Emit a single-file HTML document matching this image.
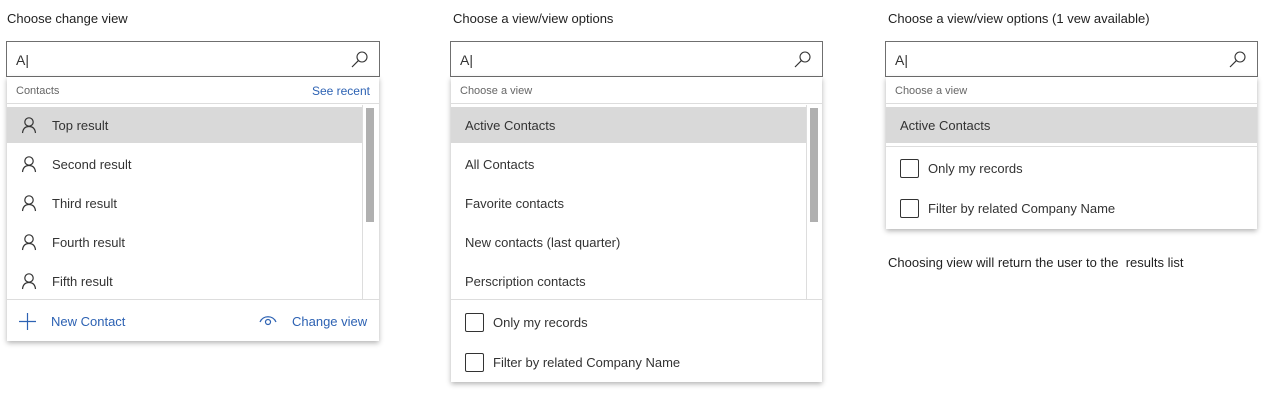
<!DOCTYPE html>
<html><head><style>
*{margin:0;padding:0;box-sizing:border-box}
body{width:1268px;height:402px;background:#fff;font-family:"Liberation Sans",sans-serif;color:#333;position:relative;overflow:hidden;font-size:13px}
.a{position:absolute;white-space:nowrap}
.t{font-size:13px;color:#222;line-height:16px}
.inp{position:absolute;height:36px;border:1px solid #6f6f6f;background:#fff}
.inp span{position:absolute;left:9px;top:10px;font-size:14px;color:#333}
.dd{position:absolute;background:#fff;box-shadow:0 2px 5px rgba(0,0,0,.3)}
.hd{position:absolute;left:0;right:0;top:0;height:27px;border-bottom:1px solid #ddd}
.hd span{position:absolute;left:9px;top:8px;font-size:11px;color:#666}
.hd span.blue{color:#2d62b3;font-size:12px;top:7px}
.row{position:absolute;left:0;height:36px;line-height:38px;font-size:13px;color:#333}
.hl{background:#d9d9d9}
.sep{position:absolute;left:0;right:0;height:1px;background:#ddd}
.cb{position:absolute;left:14px;width:19px;height:19px;border:1px solid #333;border-radius:2px}
.cbt{position:absolute;left:42px;font-size:13px;color:#333;line-height:16px}
.blue{color:#2d62b3}
</style></head><body>
<div class="a t" style="left:7px;top:11px">Choose change view</div>
<div class="a t" style="left:453px;top:11px">Choose a view/view options</div>
<div class="a t" style="left:888px;top:11px">Choose a view/view options (1 vew available)</div>

<!-- panel 1 -->
<div class="inp" style="left:6px;top:41px;width:374px"><span>A|</span>
<svg class="a" style="right:11px;top:9px" width="17" height="17" viewBox="0 0 17 17"><circle cx="11" cy="6" r="5" fill="none" stroke="#333" stroke-width="1.1"/><path d="M7.3 9.7L1 16" stroke="#333" stroke-width="1.2"/></svg></div>
<div class="dd" style="left:7px;top:77px;width:372px;height:264px">
<div class="hd"><span>Contacts</span><span class="blue" style="left:auto;right:9px">See recent</span></div>
<div class="row hl" style="top:30px;width:355px"></div>
<div style="position:absolute;left:355px;top:28px;width:1px;height:194px;background:#ddd"></div>
<div style="position:absolute;left:359px;top:31px;width:8px;height:114px;background:#b0b0b0"></div>
<div class="sep" style="top:222px"></div>
</div>
<svg width="0" height="0" style="position:absolute"><defs><g id="p"><circle cx="8" cy="5" r="4.2" fill="none" stroke="#333" stroke-width="1.2"/><path d="M1.5 16C2 11.5 4.5 9.5 8 9.5S14 11.5 14.5 16" fill="none" stroke="#333" stroke-width="1.2"/></g></defs></svg>
<svg class="a" style="left:21px;top:117px" width="16" height="17"><use href="#p"/></svg>
<svg class="a" style="left:21px;top:156px" width="16" height="17"><use href="#p"/></svg>
<svg class="a" style="left:21px;top:195px" width="16" height="17"><use href="#p"/></svg>
<svg class="a" style="left:21px;top:234px" width="16" height="17"><use href="#p"/></svg>
<svg class="a" style="left:21px;top:273px" width="16" height="17"><use href="#p"/></svg>
<div class="a" style="left:52px;top:118px">Top result</div>
<div class="a" style="left:52px;top:157px">Second result</div>
<div class="a" style="left:52px;top:196px">Third result</div>
<div class="a" style="left:52px;top:235px">Fourth result</div>
<div class="a" style="left:52px;top:274px">Fifth result</div>
<svg class="a" style="left:19px;top:313px" width="17" height="17"><path d="M8.5 0V17M0 8.5H17" stroke="#2d62b3" stroke-width="1.2"/></svg>
<div class="a blue" style="left:51px;top:314px">New Contact</div>
<svg class="a" style="left:259px;top:314px" width="18" height="12"><path d="M1 8C4 1 14 1 17 8" fill="none" stroke="#2d62b3" stroke-width="1.2"/><circle cx="9" cy="8" r="2.5" fill="none" stroke="#2d62b3" stroke-width="1.2"/></svg>
<div class="a blue" style="left:292px;top:314px">Change view</div>

<!-- panel 2 -->
<div class="inp" style="left:450px;top:41px;width:373px"><span>A|</span>
<svg class="a" style="right:11px;top:9px" width="17" height="17" viewBox="0 0 17 17"><circle cx="11" cy="6" r="5" fill="none" stroke="#333" stroke-width="1.1"/><path d="M7.3 9.7L1 16" stroke="#333" stroke-width="1.2"/></svg></div>
<div class="dd" style="left:451px;top:77px;width:371px;height:305px">
<div class="hd"><span>Choose a view</span></div>
<div class="row hl" style="top:30px;width:355px"></div>
<div style="position:absolute;left:355px;top:28px;width:1px;height:194px;background:#ddd"></div>
<div style="position:absolute;left:359px;top:31px;width:8px;height:114px;background:#b0b0b0"></div>
<div class="sep" style="top:222px"></div>
<div class="cb" style="top:236px"></div><div class="cbt" style="top:238px">Only my records</div>
<div class="cb" style="top:276px"></div><div class="cbt" style="top:278px">Filter by related Company Name</div>
</div>
<div class="a" style="left:465px;top:118px">Active Contacts</div>
<div class="a" style="left:465px;top:157px">All Contacts</div>
<div class="a" style="left:465px;top:196px">Favorite contacts</div>
<div class="a" style="left:465px;top:235px">New contacts (last quarter)</div>
<div class="a" style="left:465px;top:274px">Perscription contacts</div>

<!-- panel 3 -->
<div class="inp" style="left:885px;top:41px;width:373px"><span>A|</span>
<svg class="a" style="right:11px;top:9px" width="17" height="17" viewBox="0 0 17 17"><circle cx="11" cy="6" r="5" fill="none" stroke="#333" stroke-width="1.1"/><path d="M7.3 9.7L1 16" stroke="#333" stroke-width="1.2"/></svg></div>
<div class="dd" style="left:886px;top:77px;width:371px;height:152px">
<div class="hd"><span>Choose a view</span></div>
<div class="row hl" style="top:30px;width:371px;padding-left:14px">Active Contacts</div>
<div class="sep" style="top:69px"></div>
<div class="cb" style="top:82px"></div><div class="cbt" style="top:84px">Only my records</div>
<div class="cb" style="top:122px"></div><div class="cbt" style="top:124px">Filter by related Company Name</div>
</div>
<div class="a t" style="left:888px;top:255px">Choosing view will return the user to the&nbsp; results list</div>
</body></html>
